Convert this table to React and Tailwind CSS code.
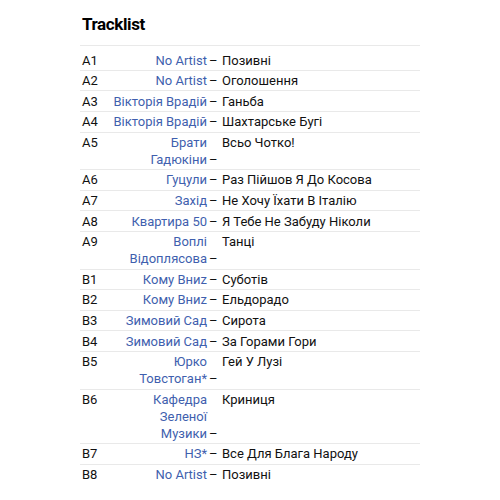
import React from "react";

const tracks = [
  ["A1", "No Artist", "Позивні"],
  ["A2", "No Artist", "Оголошення"],
  ["A3", "Вікторія Врадій", "Ганьба"],
  ["A4", "Вікторія Врадій", "Шахтарське Бугі"],
  ["A5", "Брати Гадюкіни", "Всьо Чотко!"],
  ["A6", "Гуцули", "Раз Пійшов Я До Косова"],
  ["A7", "Захід", "Не Хочу Їхати В Італію"],
  ["A8", "Квартира 50", "Я Тебе Не Забуду Ніколи"],
  ["A9", "Воплі Відоплясова", "Танці"],
  ["B1", "Кому Вниz", "Суботів"],
  ["B2", "Кому Вниz", "Ельдорадо"],
  ["B3", "Зимовий Сад", "Сирота"],
  ["B4", "Зимовий Сад", "За Горами Гори"],
  ["B5", "Юрко Товстоган*", "Гей У Лузі"],
  ["B6", "Кафедра Зеленої Музики", "Криниця"],
  ["B7", "НЗ*", "Все Для Блага Народу"],
  ["B8", "No Artist", "Позивні"],
];

export default function App() {
  return (
    <div
      className="w-[500px] h-[500px] bg-white text-[#111] overflow-hidden"
      style={{ fontFamily: "Roboto, 'Noto Sans', sans-serif" }}
    >
      <h2 className="ml-[82px] pt-[12px] text-[17px] leading-[24px] font-bold tracking-[-0.4px] text-black">
        Tracklist
      </h2>
      <div className="ml-[80px] mt-[9px] w-[340px] text-[13px] leading-[17px]">
        {tracks.map(([pos, artist, title], i) => (
          <div
            key={pos}
            className={
              "flex border-t border-[#e9e9e9] pb-[1.3px] " +
              (i === 0 ? "pt-[5.5px]" : "pt-[1.3px]")
            }
          >
            <div className="w-[33px] pl-[2px] shrink-0">{pos}</div>
            <div className="w-[94px] shrink-0 text-right text-[#3f5fae]">
              {artist}
            </div>
            <div className="w-[10px] shrink-0 pl-[2px] self-end">–</div>
            <div className="pl-[5px] flex-1">{title}</div>
          </div>
        ))}
      </div>
    </div>
  );
}
